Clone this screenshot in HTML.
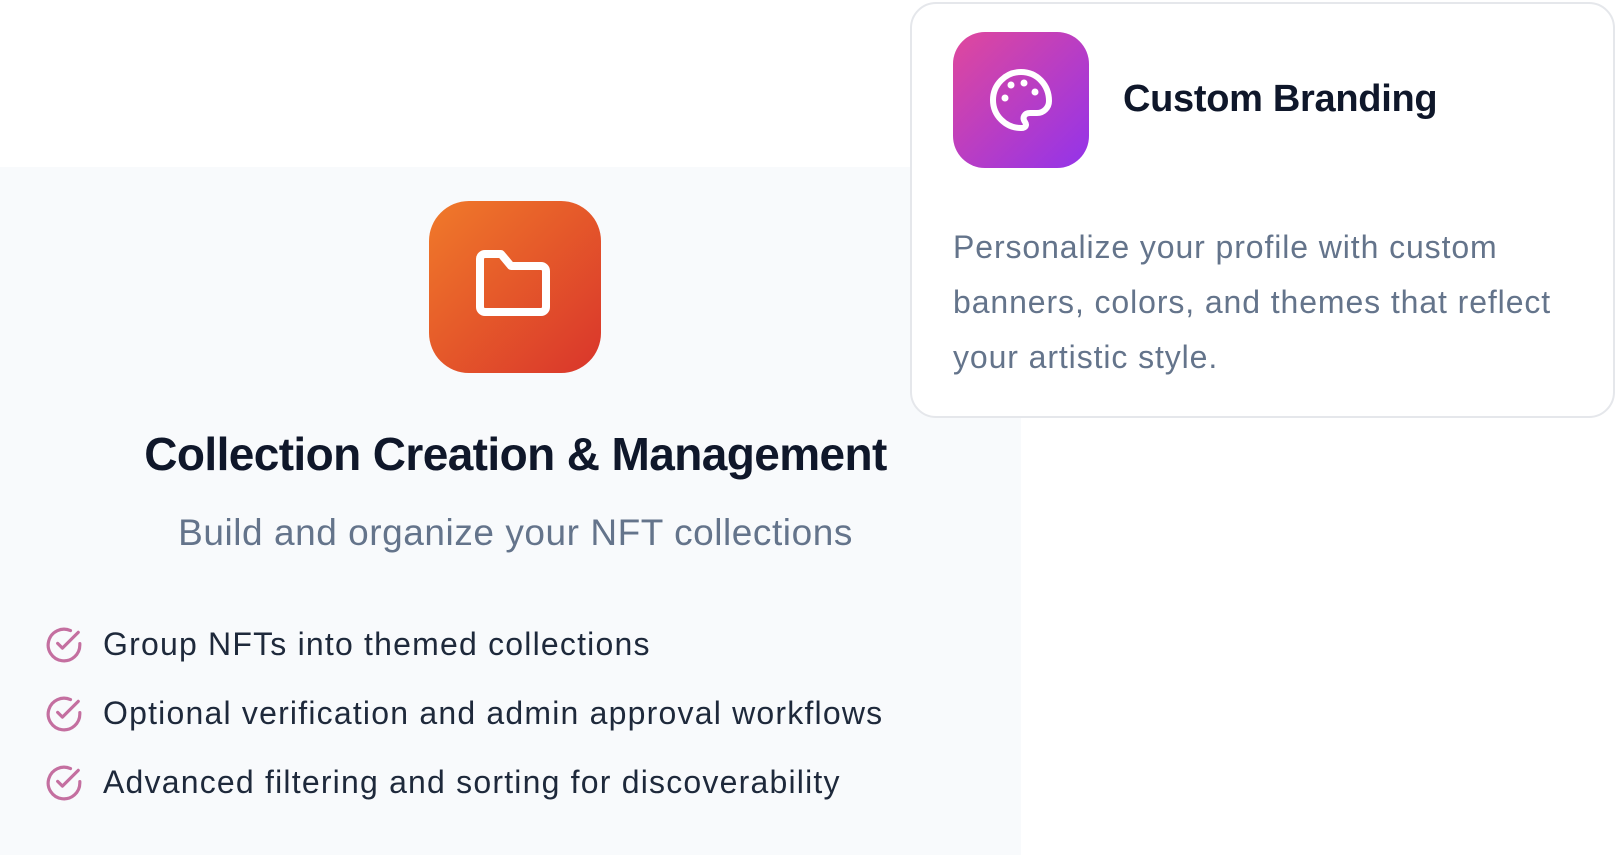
<!DOCTYPE html>
<html><head><meta charset="utf-8"><style>
*{margin:0;padding:0;box-sizing:border-box}
body{width:1617px;height:855px;background:#fff;font-family:"Liberation Sans",sans-serif;position:relative;overflow:hidden}
.panel{position:absolute;left:0;top:167px;width:1021px;height:688px;background:#f8fafc}
.oicon{position:absolute;left:429px;top:201px;width:172px;height:172px;border-radius:40px;background:linear-gradient(135deg,#f07a2a,#d9352b)}
.h1{position:absolute;left:0;width:1031px;text-align:center;top:427px;font-size:46px;font-weight:bold;color:#0f172a;letter-spacing:-0.6px}
.sub{position:absolute;left:0;width:1031px;text-align:center;top:512px;font-size:37px;color:#64748b;letter-spacing:0.55px}
.li{position:absolute;left:103px;font-size:32px;color:#1e293b;letter-spacing:1.2px}
.ck{position:absolute;left:45px}
.card{position:absolute;left:910px;top:2px;width:705px;height:416px;border:2px solid #e5e7eb;border-radius:26px;background:#fff}
.picon{position:absolute;left:41px;top:28px;width:136px;height:136px;border-radius:32px;background:linear-gradient(135deg,#e0489c,#9333ea)}
.ct{position:absolute;left:211px;top:74px;font-size:38px;font-weight:bold;color:#0f172a;letter-spacing:-0.3px}
.cd{position:absolute;left:41px;top:216px;white-space:nowrap;font-size:32px;line-height:55px;color:#64748b;letter-spacing:0.9px}
</style></head><body>
<div class="panel"></div>
<div class="oicon"><svg width="172" height="172" viewBox="0 0 172 172"><path d="M51 58a5 5 0 0 1 5-5h16l10 12h30a5 5 0 0 1 5 5v36a5 5 0 0 1-5 5H56a5 5 0 0 1-5-5z" fill="none" stroke="#fff" stroke-width="8" stroke-linejoin="round"/></svg></div>
<div class="h1">Collection Creation &amp; Management</div>
<div class="sub">Build and organize your NFT collections</div>
<svg class="ck" style="top:626px" width="38" height="38" viewBox="0 0 24 24" fill="none" stroke="#c46fa0" stroke-width="2" stroke-linecap="round" stroke-linejoin="round"><path d="M22 11.1V12a10 10 0 1 1-5.9-9.1"/><path d="M8 11l3 3L21 4"/></svg>
<div class="li" style="top:626px">Group NFTs into themed collections</div>
<svg class="ck" style="top:695px" width="38" height="38" viewBox="0 0 24 24" fill="none" stroke="#c46fa0" stroke-width="2" stroke-linecap="round" stroke-linejoin="round"><path d="M22 11.1V12a10 10 0 1 1-5.9-9.1"/><path d="M8 11l3 3L21 4"/></svg>
<div class="li" style="top:695px">Optional verification and admin approval workflows</div>
<svg class="ck" style="top:764px" width="38" height="38" viewBox="0 0 24 24" fill="none" stroke="#c46fa0" stroke-width="2" stroke-linecap="round" stroke-linejoin="round"><path d="M22 11.1V12a10 10 0 1 1-5.9-9.1"/><path d="M8 11l3 3L21 4"/></svg>
<div class="li" style="top:764px">Advanced filtering and sorting for discoverability</div>
<div class="card">
<div class="picon"><svg width="136" height="136" viewBox="0 0 136 136"><path d="M68 40a28 28 0 0 0 0 56c5 0 6-3 4-6-3-4-1-9 5-9h7a12 12 0 0 0 12-12c0-16-12-29-28-29z" fill="none" stroke="#fff" stroke-width="6" stroke-linejoin="round"/><circle cx="58" cy="53" r="3.5" fill="#fff"/><circle cx="71" cy="51" r="3.5" fill="#fff"/><circle cx="82" cy="60" r="3.5" fill="#fff"/><circle cx="52" cy="66" r="3.5" fill="#fff"/></svg></div>
<div class="ct">Custom Branding</div>
<div class="cd">Personalize your profile with custom<br>banners, colors, and themes that reflect<br>your artistic style.</div>
</div>
</body></html>
